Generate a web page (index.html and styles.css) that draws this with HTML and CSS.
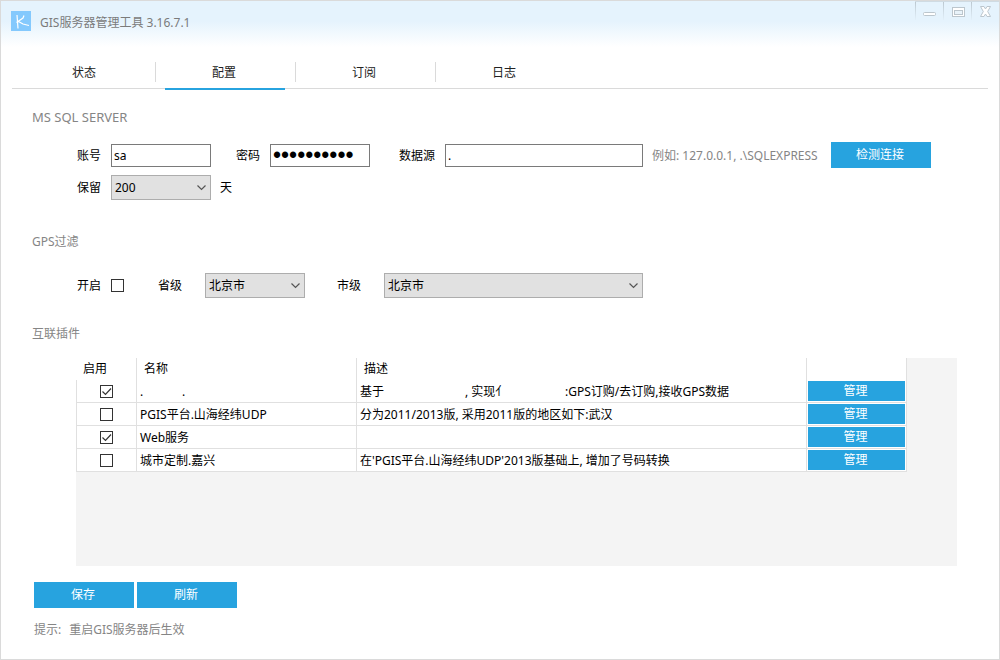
FILE: index.html
```html
<!DOCTYPE html>
<html lang="zh-CN">
<head>
  <meta charset="utf-8">
  <title>GIS服务器管理工具</title>
  <link rel="stylesheet" href="styles.css">
</head>
<body>
  <div class="window">
    <header class="title-bar">
      <svg class="logo" width="20" height="20" viewBox="0 0 20 20">
        <rect width="20" height="20" fill="#84c9fd"/>
        <path d="M6 4L7 17.500M13 4.500L12 7L5.500 11.500M7.500 10.500L12 13L18 14.500" fill="none" stroke="#fff" stroke-width="1.200"/>
      </svg>
      <h1>GIS服务器管理工具 3.16.7.1</h1>
      <div class="window-buttons">
        <button type="button" aria-label="最小化">
          <svg width="14" height="14" viewBox="0 0 14 14">
            <rect x="0.500" y="7.500" width="12" height="3" rx="1" fill="#fff" stroke="#bcc6cd"/>
          </svg>
        </button>
        <button type="button" aria-label="最大化">
          <svg width="14" height="14" viewBox="0 0 14 14">
            <rect x="1.500" y="2.500" width="12" height="9" fill="#fff" stroke="#bcc6cd"/>
            <rect x="3.500" y="5.500" width="8" height="4" fill="#e9f3fa" stroke="#bcc6cd"/>
          </svg>
        </button>
        <button type="button" aria-label="关闭">
          <svg width="14" height="14" viewBox="0 0 14 14">
            <path d="M1.500 1.500H5L6.500 4L8 1.500H11.500L8.700 6.500L11.500 11.500H8L6.500 9L5 11.500H1.500L4.300 6.500Z" fill="#fff" stroke="#bcc6cd"/>
          </svg>
        </button>
      </div>
    </header>

    <nav class="tabs">
      <a href="#status">状态</a>
      <a href="#config" class="active">配置</a>
      <a href="#subscribe">订阅</a>
      <a href="#log">日志</a>
    </nav>

    <form class="content">
      <h2 class="latin">MS SQL SERVER</h2>
      <div class="fields sql-fields">
        <label for="account">账号</label>
        <input type="text" id="account" value="sa">
        <label for="password">密码</label>
        <input type="password" id="password" value="1234567890">
        <label for="source">数据源</label>
        <input type="text" id="source" value=".">
        <span class="hint">例如: 127.0.0.1, .\SQLEXPRESS</span>
        <button type="button" class="btn">检测连接</button>

        <label for="keep">保留</label>
        <select id="keep">
          <option>200</option>
        </select>
        <span class="unit">天</span>
      </div>

      <h2>GPS过滤</h2>
      <div class="fields gps-fields">
        <label for="filter">开启</label>
        <input type="checkbox" id="filter">
        <label for="province" class="left">省级</label>
        <select id="province">
          <option>北京市</option>
        </select>
        <label for="city" class="left city">市级</label>
        <select id="city">
          <option>北京市</option>
        </select>
      </div>

      <h2>互联插件</h2>
      <div class="plugins">
        <table>
          <colgroup>
            <col class="col-enable">
            <col class="col-name">
            <col>
            <col class="col-action">
          </colgroup>
          <thead>
            <tr>
              <th>启用</th>
              <th>名称</th>
              <th>描述</th>
              <th></th>
            </tr>
          </thead>
          <tbody>
            <tr>
              <td class="center"><input type="checkbox" aria-label="启用" checked></td>
              <td><div class="line"><span class="dot">.</span><span>.</span></div></td>
              <td>
                <div class="line">
                  <span class="base">基于</span><span class="impl">, 实现亻</span><span>:GPS订购/去订购,接收GPS数据</span>
                </div>
              </td>
              <td class="center"><button type="button" class="btn manage">管理</button></td>
            </tr>
            <tr>
              <td class="center"><input type="checkbox" aria-label="启用"></td>
              <td>PGIS平台.山海经纬UDP</td>
              <td>分为2011/2013版, 采用2011版的地区如下:武汉</td>
              <td class="center"><button type="button" class="btn manage">管理</button></td>
            </tr>
            <tr>
              <td class="center"><input type="checkbox" aria-label="启用" checked></td>
              <td>Web服务</td>
              <td></td>
              <td class="center"><button type="button" class="btn manage">管理</button></td>
            </tr>
            <tr>
              <td class="center"><input type="checkbox" aria-label="启用"></td>
              <td>城市定制.嘉兴</td>
              <td>在'PGIS平台.山海经纬UDP'2013版基础上, 增加了号码转换</td>
              <td class="center"><button type="button" class="btn manage">管理</button></td>
            </tr>
          </tbody>
        </table>
      </div>

      <div class="actions">
        <button type="submit" class="btn">保存</button>
        <button type="reset" class="btn">刷新</button>
      </div>
      <p class="tip"><span>提示:</span><span>重启GIS服务器后生效</span></p>
    </form>
  </div>
</body>
</html>
```
FILE: styles.css
```css
* {
  box-sizing: border-box;
}

body {
  margin: 0;
  font-family: "Noto Sans", "Noto Sans CJK SC", sans-serif;
  font-size: 12px;
  line-height: 18px;
  color: #000;
}

input,
select,
button {
  margin: 0;
  font: inherit;
  color: inherit;
  border-radius: 0;
}

.window {
  min-height: 100vh;
  border: 1px solid #dadada;
  background: linear-gradient(#e5f3fd 0, #e5f3fd 20px, #fff 46px);
}

/* title bar */
.title-bar {
  display: flex;
  align-items: flex-start;
  height: 60px;
  padding-left: 10px;
}

.logo {
  margin-top: 10px;
}

h1 {
  flex: 1;
  margin: 13px 0 0 9px;
  font-size: 12px;
  font-weight: normal;
  color: #7b7b7b;
}

.window-buttons {
  display: flex;
  border-top: 1px solid #cfdbe3;
}

.window-buttons button {
  width: 28px;
  height: 18px;
  padding: 2px 0 0;
  border: 0;
  border-left: 1px solid;
  border-image: linear-gradient(#b9c5cd, #e5f3fd) 1;
  background: none;
  line-height: 0;
}

/* tabs */
.tabs {
  display: flex;
  margin: 0 11px;
  padding-left: 13px;
  border-bottom: 1px solid #dadada;
}

.tabs a {
  position: relative;
  width: 120px;
  height: 29px;
  margin: 0 20px -2px 0;
  padding: 3px 2px 0 0;
  border-bottom: 2px solid transparent;
  text-align: center;
  color: #222;
  text-decoration: none;
}

.tabs a.active {
  border-bottom-color: #27a3df;
}

.tabs a:not(:last-child)::after {
  content: "";
  position: absolute;
  top: 1px;
  right: -11px;
  width: 1px;
  height: 20px;
  background: #dadada;
}

/* form */
.content {
  padding: 19px 42px 20px 31px;
}

h2 {
  margin: 0;
  font-size: 12px;
  font-weight: normal;
  color: #858585;
}

h2.latin {
  font-size: 13px;
}

.fields {
  display: grid;
  align-items: center;
  margin: 16px 26px 0 44px;
}

.sql-fields {
  grid-template-columns: 35px 100px 59px 100px 75px 1fr 188px 100px;
  row-gap: 7px;
  margin-bottom: 33px;
}

.gps-fields {
  grid-template-columns: 35px 47px 47px 100px 79px 1fr;
  margin-top: 22px;
  margin-right: 314px;
  margin-bottom: 27px;
}

.fields label {
  padding-right: 10px;
  text-align: right;
}

.sql-fields label,
.hint {
  padding-top: 1px;
}

.fields label.left {
  padding-right: 0;
  text-align: left;
}

.fields label.city {
  padding-left: 32px;
}

.fields input:not([type="checkbox"]) {
  width: 100%;
  height: 23px;
  padding: 0 2px;
  border: 1px solid #7a7a7a;
  background: #fff;
}

.fields input[type="password"] {
  font-family: "Liberation Sans", sans-serif;
  font-size: 23px;
}

select {
  appearance: none;
  width: 100%;
  height: 25px;
  padding: 0 20px 0 3px;
  border: 1px solid #adadad;
  background: #e1e1e1 url("data:image/svg+xml,%3Csvg xmlns='http://www.w3.org/2000/svg' width='9' height='6'%3E%3Cpath d='M.5 .5l4 4 4-4' fill='none' stroke='%23555' stroke-width='1.200'/%3E%3C/svg%3E") no-repeat right 4px center;
}

input[type="checkbox"] {
  appearance: none;
  display: block;
  width: 13px;
  height: 13px;
  border: 1px solid #333;
  background: #fff;
}

input[type="checkbox"]:checked {
  background: #fff url("data:image/svg+xml,%3Csvg xmlns='http://www.w3.org/2000/svg' width='11' height='11'%3E%3Cpath d='M1.500 5.500l3 3 5.500-6' fill='none' stroke='%23333' stroke-width='1.200'/%3E%3C/svg%3E") no-repeat center;
}

.hint,
.unit {
  padding-left: 9px;
}

.hint,
.tip {
  color: #858585;
  white-space: nowrap;
}

.btn {
  width: 100px;
  height: 26px;
  padding: 0 2px 0 0;
  border: 0;
  background: #27a3df;
  color: #fff;
  cursor: pointer;
}

/* plugin list */
.plugins {
  min-height: 208px;
  margin: 15px 0 0 44px;
  background: #f4f4f4;
}

table {
  width: calc(100% - 50px);
  table-layout: fixed;
  border-spacing: 0;
  background: #fff;
}

.col-enable {
  width: 61px;
}

.col-name {
  width: 220px;
}

.col-action {
  width: 100px;
}

th,
td {
  border-right: 1px solid #e0e0e0;
  text-align: left;
  white-space: nowrap;
}

th {
  height: 22px;
  padding: 0 7px;
  font-weight: normal;
}

td {
  height: 23px;
  padding: 2px 3px 0;
  border-bottom: 1px solid #e0e0e0;
}

td:first-child {
  border-left: 1px solid #e0e0e0;
}

td.center {
  padding: 0 1px;
}

td.center input {
  margin: 0 auto;
}

.btn.manage {
  display: block;
  width: 100%;
  height: 20px;
}

.line {
  display: flex;
}

.dot {
  width: 42px;
}

.base {
  width: 105px;
}

.impl {
  width: 100px;
}

.actions {
  display: flex;
  gap: 3px;
  margin: 16px 0 0 2px;
}

.tip {
  display: flex;
  gap: 8px;
  margin: 13px 0 0 2px;
}
```
